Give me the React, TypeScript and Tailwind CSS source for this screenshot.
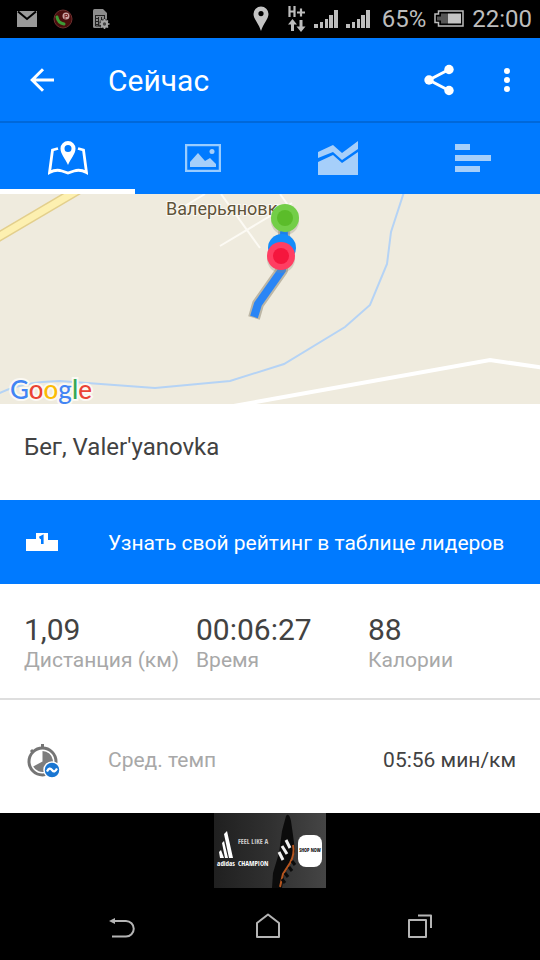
import React, { useState } from 'react';

const MailIcon = () => (
  <svg width="20" height="16" viewBox="0 0 20 16">
    <rect width="20" height="16" fill="#999" />
    <path d="M1 0.500 L10 8 L19 0.500" fill="none" stroke="#000" strokeWidth="2" />
  </svg>
);

const CallRecorderIcon = () => (
  <svg width="20" height="20" viewBox="0 0 20 20">
    <circle cx="10" cy="10" r="9" fill="#4a0d0d" stroke="#6d3030" />
    <path d="M4 8Q5 14 11 15" fill="none" stroke="#3d9a35" strokeWidth="3" strokeLinecap="round" />
    <circle cx="13" cy="7" r="3.500" fill="#c9a3a3" />
    <path d="M12 5v5M12 5.500h2.500v2H12" fill="none" stroke="#7c2626" />
  </svg>
);

const SimIcon = () => (
  <svg width="18" height="20" viewBox="0 0 18 20">
    <path d="M0 1.500Q0 0 1.500 0H10L14 4V19H1.500Q0 19 0 17.500Z" fill="#8c8c8c" />
    <path d="M2 6.500h10M2.500 7v10h7M3 9.500h2M3 12.500h2M3 15.500h2M5.500 8v9M8.500 8v5M11.500 7v3" fill="none" stroke="#222" />
    <circle cx="11.500" cy="15" r="5.500" fill="#000" opacity="0.500" />
    <circle cx="11.500" cy="15" r="2.700" fill="none" stroke="#a5a5a5" strokeWidth="2" />
    <path
      d="M11.500 10v2M11.500 18v2M6.500 15h2M14.500 15h2M8 11.500l1.400 1.400M13.600 17.100l1.400 1.400M15 11.500l-1.400 1.400M9.400 17.100L8 18.500"
      stroke="#a5a5a5"
      strokeWidth="1.600"
    />
  </svg>
);

const LocationIcon = () => (
  <svg width="16" height="26" viewBox="0 0 16 26">
    <path
      fillRule="evenodd"
      d="M8 0.500A7.500 7.500 0 0 0 0.500 8C0.500 13 5.500 17 8 25C10.500 17 15.500 13 15.500 8A7.500 7.500 0 0 0 8 0.500ZM8 5a2.600 2.600 0 1 1 0 5.200a2.600 2.600 0 0 1 0-5.200Z"
      fill="#c4c4c4"
    />
  </svg>
);

const DataIcon = () => (
  <svg width="18" height="26" viewBox="0 0 18 26">
    <path d="M1.500 0v11M6.500 0v11M1.500 5.500H7M9 6.500h8M13 2.500v8" fill="none" stroke="#bdbdbd" strokeWidth="2.200" />
    <path d="M4.500 13L9 18.500H6V25H3V18.500H0ZM13 26L8.500 20.500h3V14h3v6.500h3Z" fill="#bdbdbd" />
  </svg>
);

const SignalIcon = () => (
  <svg width="24" height="18" viewBox="0 0 24 18">
    <path d="M0 14h4v4H0ZM6 12h3v6H6ZM11 9h3v9h-3ZM15 5h4v13h-4ZM20 0h4v18h-4Z" fill="#bdbdbd" />
  </svg>
);

const BatteryIcon = () => (
  <svg width="30" height="18" viewBox="0 0 30 18">
    <path d="M4.500 1H29V16H4.500V12.500H1V4H4.500Z" fill="none" stroke="#bdbdbd" strokeWidth="1.500" />
    <path d="M7 3.500h7v10H7v-3H3v-4h4Z" fill="#555" />
    <rect x="14" y="3.500" width="13" height="10" fill="#c4c4c4" />
  </svg>
);

const BackArrowIcon = () => (
  <svg width="24" height="24" viewBox="0 0 24 24" fill="none" stroke="#fff" strokeWidth="3">
    <path d="M24 12H2M13 1.200L2.200 12L13 22.800" />
  </svg>
);

const ShareIcon = () => (
  <svg width="30" height="32" viewBox="0 0 30 32">
    <path d="M25 5.500L5 16L25 26.500" fill="none" stroke="#fff" strokeWidth="3" />
    <circle cx="25" cy="5.500" r="4.700" fill="#fff" />
    <circle cx="5" cy="16" r="4.700" fill="#fff" />
    <circle cx="25" cy="26.500" r="4.700" fill="#fff" />
  </svg>
);

const MoreIcon = () => (
  <svg width="6" height="24" viewBox="0 0 6 24" fill="#fff">
    <circle cx="3" cy="3" r="3" />
    <circle cx="3" cy="12" r="3" />
    <circle cx="3" cy="21" r="3" />
  </svg>
);

const MapIcon = () => (
  <svg width="40" height="34" viewBox="0 0 40 34">
    <path
      d="M10 7.500L4.500 9L1.500 31.500Q8 28 14 30L20 32L26 30Q32 28 38.500 31.500L35.500 9L30 7.500"
      fill="none"
      stroke="#fff"
      strokeWidth="2.800"
    />
    <path
      fillRule="evenodd"
      d="M20 0A7.500 7.500 0 0 0 12.500 7.500C12.500 13 17 17 20 24C23 17 27.500 13 27.500 7.500A7.500 7.500 0 0 0 20 0ZM20 4a3.500 3.500 0 1 1 0 7a3.500 3.500 0 0 1 0-7Z"
      fill="#fff"
    />
  </svg>
);

const PhotoIcon = () => (
  <svg width="36" height="28" viewBox="0 0 36 28">
    <rect x="1" y="1" width="34" height="26" fill="none" stroke="#99ccff" strokeWidth="2.500" />
    <path d="M5 23V18L13 9L20 17L25 14L31 20V23Z" fill="#a6cffa" />
    <circle cx="27" cy="7.500" r="2.500" fill="#a6cffa" />
  </svg>
);

const GraphIcon = () => (
  <svg width="40" height="34" viewBox="0 0 40 34" fill="#a6cffa">
    <path d="M0 11L15 4L24 12L40 0V8L24 19L15 11L0 17Z" />
    <path d="M0 21L15 14L24 22L40 11V34H0Z" />
  </svg>
);

const SplitsIcon = () => (
  <svg width="36" height="28" viewBox="0 0 36 28" fill="#a6cffa">
    <path d="M0 0h15v6H0ZM0 11h36v6H0ZM0 22h25v6H0Z" />
  </svg>
);

const PodiumIcon = () => (
  <svg width="32" height="18" viewBox="0 0 32 18">
    <path d="M10 0H22V7H32V18H0V6H10Z" fill="#fff" />
    <path d="M13.500 5L16.300 3.500V11" fill="none" stroke="#007aff" strokeWidth="2.600" />
  </svg>
);

const PaceIcon = () => (
  <svg width="34" height="36" viewBox="0 0 34 36">
    <path d="M15.500 1v5M4 7l3 3" stroke="#757575" strokeWidth="3" />
    <circle cx="15.500" cy="18.500" r="13.500" fill="#fff" stroke="#757575" strokeWidth="3" />
    <path d="M15.500 18.500V8A10.500 10.500 0 1 1 6.200 23.500Z" fill="#7d7d7d" />
    <circle cx="25" cy="27" r="8" fill="#1976d2" stroke="#fff" strokeWidth="1.500" />
    <path d="M20 28.500Q22.500 23.500 25 27T30 25.500" fill="none" stroke="#fff" strokeWidth="2.200" />
  </svg>
);

const tabs = [
  { id: 'map', label: 'Карта', icon: <MapIcon /> },
  { id: 'photos', label: 'Фото', icon: <PhotoIcon /> },
  { id: 'graph', label: 'График', icon: <GraphIcon /> },
  { id: 'splits', label: 'Отрезки', icon: <SplitsIcon /> },
];

const stats = [
  { value: '1,09', label: 'Дистанция (км)' },
  { value: '00:06:27', label: 'Время' },
  { value: '88', label: 'Калории' },
];

const logoLetters = [
  { letter: 'G', color: 'text-[#4285f4]' },
  { letter: 'o', color: 'text-[#ea4335]' },
  { letter: 'o', color: 'text-[#fbbc05]' },
  { letter: 'g', color: 'text-[#4285f4]' },
  { letter: 'l', color: 'text-[#34a853]' },
  { letter: 'e', color: 'text-[#ea4335]' },
];

const StatusBar = () => (
  <div className="flex h-[38px] items-center justify-between bg-black pr-2 pl-[17px] text-2xl text-[#bdbdbd]">
    <div className="flex items-center gap-4">
      <MailIcon />
      <CallRecorderIcon />
      <div className="pl-1">
        <SimIcon />
      </div>
    </div>
    <div className="flex items-center gap-2">
      <div className="flex items-center gap-[19px]">
        <LocationIcon />
        <DataIcon />
      </div>
      <SignalIcon />
      <SignalIcon />
      <span className="pl-1">65%</span>
      <BatteryIcon />
      <span>22:00</span>
    </div>
  </div>
);

const RouteMap = () => (
  <div className="relative h-[210px] overflow-hidden bg-[#efebde]">
    <svg className="h-full w-full" viewBox="0 0 540 210" preserveAspectRatio="xMidYMid slice">
      <g fill="none">
        <path d="M-5 45L78 -4" stroke="#e3cf8c" strokeWidth="10" />
        <path d="M-5 45L78 -4" stroke="#fdf0b0" strokeWidth="7" />
        <path d="M220 52L292 9M221 0L260 54M280 0L295 21M205 0L185 12" stroke="#fcfaf4" strokeWidth="2" />
        <path
          d="M-2 200Q20 188 60 187L155 194L230 187L284 170L345 133L370 111L387 70L391 38L404 -2"
          stroke="#b5d3f5"
          strokeWidth="2"
        />
        <path d="M228 213L490 166L545 174" stroke="#fff" strokeWidth="4" />
      </g>
      <text
        x="166"
        y="21"
        className="font-[Roboto,sans-serif] text-[18px]"
        fill="#5f5339"
        stroke="#fbf9f3"
        strokeWidth="2"
        paintOrder="stroke"
      >
        Валерьяновка
      </text>
      <g fill="none" strokeLinejoin="round">
        <path d="M285 24L282 76L258 110L254 124" stroke="#bcb6a5" strokeWidth="12" />
        <path d="M285 24L282 76L258 110L254 123" stroke="#2a85f5" strokeWidth="8" />
      </g>
      <circle cx="285" cy="27" r="14" fill="#8f8b7c" opacity="0.300" />
      <circle cx="285" cy="24" r="14" fill="#73ce48" />
      <circle cx="285" cy="24" r="8" fill="#5bbc2a" />
      <path d="M284 38L282 52" stroke="#1c80e8" strokeWidth="7" />
      <circle cx="282" cy="54" r="14" fill="#148cfa" />
      <circle cx="281" cy="65" r="14" fill="#8f8b7c" opacity="0.300" />
      <circle cx="281" cy="62" r="14" fill="#ff3e62" />
      <circle cx="281" cy="62" r="8" fill="#f5163d" />
    </svg>
    <div className="absolute bottom-0 left-[10px] font-[Lato,sans-serif] text-[26px] leading-[30px] font-medium [-webkit-text-stroke:4px_#fbf9f3] [paint-order:stroke]">
      {logoLetters.map((item, i) => (
        <span key={i} className={item.color}>
          {item.letter}
        </span>
      ))}
    </div>
  </div>
);

const AdBanner = () => (
  <a
    href="#shop"
    className="mx-auto flex h-[75px] w-28 items-center bg-linear-to-r from-[#202020] via-[#303030] to-[#454545] pl-1 font-['Noto_Sans_ExtraCondensed','Open_Sans_Condensed','Noto_Sans_Condensed','Roboto_Condensed',sans-serif] text-white"
  >
    <span className="flex w-4 flex-col items-center">
      <svg width="14" height="27" viewBox="0 0 14 27" fill="#fff">
        <path d="M5 3L8 0L14 27H10ZM3 12L5 10L9 27H6ZM0 21L2 19L5 27H1Z" />
      </svg>
      <span className="text-[7px] leading-3 font-bold">adidas</span>
    </span>
    <span className="flex w-9 flex-col pt-1 pl-1 leading-[22px]">
      <span className="text-[7px] whitespace-nowrap text-[#ccc]">FEEL LIKE A</span>
      <span className="text-[7px] font-bold">CHAMPION</span>
    </span>
    <svg width="28" height="75" viewBox="0 0 28 75">
      <path d="M16 3Q19 -1 21 8L23 22L25 38L21 50L14 62L12 75H2L3 60L9 40L12 18Z" fill="#0b0b0b" />
      <path d="M23 32Q25 41 20 50L13 61L10 74" fill="none" stroke="#b7561f" strokeWidth="2" />
      <path d="M9 39l4 8M12 33l5 8M16 27l4 8" stroke="#eee" strokeWidth="3" />
      <path d="M22 48l3 4M19 54l3 4M15 60l3 4M12 66l3 4M7 71l1 4" stroke="#0b0b0b" strokeWidth="3" />
    </svg>
    <span className="flex h-8 w-6 items-center justify-center rounded-lg bg-white text-[5px] font-bold whitespace-nowrap text-black">
      SHOP NOW
    </span>
  </a>
);

const NavigationBar = () => (
  <nav className="flex h-[72px] items-center justify-between px-[96px] pt-1">
    <button type="button" aria-label="Назад" className="flex size-12 items-center justify-center pt-1 pl-1">
      <svg width="26" height="20" viewBox="0 0 26 20">
        <path d="M4 3H17A7.500 7.500 0 0 1 17 18.500H3" fill="none" stroke="#b5b5b5" strokeWidth="2" />
        <path d="M0 3L6 0V6Z" fill="#b5b5b5" />
      </svg>
    </button>
    <button type="button" aria-label="Домой" className="flex size-12 items-center justify-center pr-1">
      <svg width="24" height="26" viewBox="0 0 24 26" fill="none" stroke="#b5b5b5" strokeWidth="2" strokeLinejoin="round">
        <path d="M1 10L12 1.500L23 10V24H1Z" />
      </svg>
    </button>
    <button type="button" aria-label="Недавние" className="flex size-12 items-center justify-center">
      <svg width="24" height="24" viewBox="0 0 24 24" fill="none" stroke="#b5b5b5" strokeWidth="2" strokeLinejoin="round">
        <rect x="1" y="6" width="17" height="17" />
        <path d="M10 1.500H23V14" />
      </svg>
    </button>
  </nav>
);

export default function App() {
  const [activeTab, setActiveTab] = useState('map');

  return (
    <div className="min-h-screen bg-black font-[Roboto,sans-serif]">
      <StatusBar />

      <header className="flex h-[85px] items-center border-b-2 border-[#0068da] bg-[#007aff] pr-[30px] pl-[30px] text-white">
        <button type="button" aria-label="Назад">
          <BackArrowIcon />
        </button>
        <h1 className="flex-1 pt-0.5 pl-[54px] text-[30px] leading-9">Сейчас</h1>
        <div className="flex items-center gap-[50px]">
          <button type="button" aria-label="Поделиться">
            <ShareIcon />
          </button>
          <button type="button" aria-label="Ещё">
            <MoreIcon />
          </button>
        </div>
      </header>

      <div role="tablist" className="grid h-[71px] grid-cols-4 bg-[#007aff]">
        {tabs.map((tab) => (
          <button
            key={tab.id}
            type="button"
            role="tab"
            aria-label={tab.label}
            aria-selected={activeTab === tab.id}
            onClick={() => setActiveTab(tab.id)}
            className={`flex items-center justify-center border-b-[5px] pt-1 ${
              activeTab === tab.id ? 'border-white' : 'border-transparent'
            }`}
          >
            {tab.icon}
          </button>
        ))}
      </div>

      <RouteMap />

      <main className="bg-white text-[#424242]">
        <h2 className="h-24 px-6 pt-[27px] text-2xl">Бег, Valer'yanovka</h2>

        <a href="#leaderboard" className="flex h-[84px] items-center bg-[#007aff] pl-[26px] text-[21px] text-white">
          <PodiumIcon />
          <span className="pt-1 pl-[50px]">Узнать свой рейтинг в таблице лидеров</span>
        </a>

        <dl className="grid h-[116px] grid-cols-3 border-b-2 border-[#dedede] pt-7 pb-6 pl-6">
          {stats.map((stat) => (
            <div key={stat.label} className="flex flex-col-reverse justify-end">
              <dt className="text-[21px] leading-6 whitespace-nowrap text-[#a8a8a8]">{stat.label}</dt>
              <dd className="text-[30px] leading-9">{stat.value}</dd>
            </div>
          ))}
        </dl>

        <div className="flex h-[113px] items-center pt-2 pr-6 pl-[27px] text-[21px]">
          <PaceIcon />
          <span className="flex-1 pl-[47px] text-[#a8a8a8]">Сред. темп</span>
          <span>05:56 мин/км</span>
        </div>
      </main>

      <AdBanner />
      <NavigationBar />
    </div>
  );
}
